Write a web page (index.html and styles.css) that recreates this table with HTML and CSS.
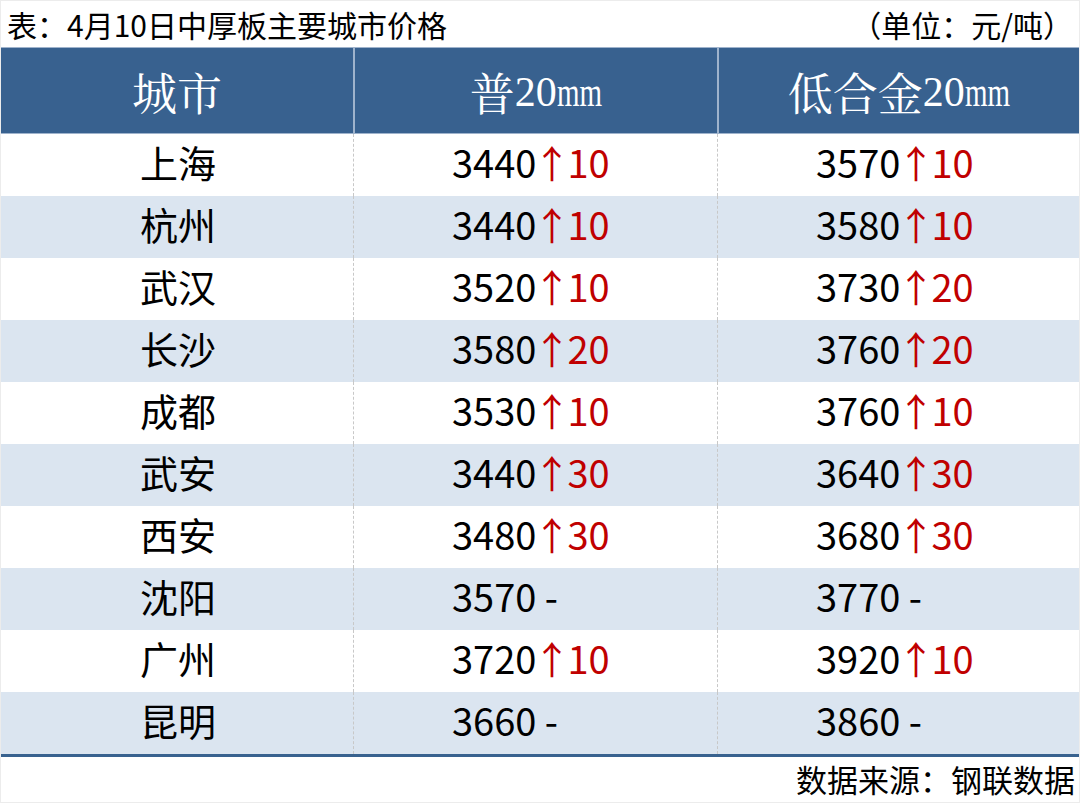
FILE: index.html
```html
<!DOCTYPE html>
<html lang="zh-CN">
<head>
<meta charset="utf-8">
<link rel="stylesheet" href="styles.css">
</head>
<body>
<div class="page">
  <div class="caption">
    <span class="title">表：4月10日中厚板主要城市价格</span>
    <span class="unit">（单位：元/吨）</span>
  </div>
  <div class="table">
    <div class="hrow">
      <div class="hcell">城市</div>
      <div class="hcell">普<span class="lat">20<span class="mm">mm</span></span></div>
      <div class="hcell">低合金<span class="lat">20<span class="mm">mm</span></span></div>
    </div>
    <div class="row"><div class="city">上海</div><div class="val">3440<span class="up"><span class="arr">↑</span>10</span></div><div class="val">3570<span class="up"><span class="arr">↑</span>10</span></div></div>
    <div class="row alt"><div class="city">杭州</div><div class="val">3440<span class="up"><span class="arr">↑</span>10</span></div><div class="val">3580<span class="up"><span class="arr">↑</span>10</span></div></div>
    <div class="row"><div class="city">武汉</div><div class="val">3520<span class="up"><span class="arr">↑</span>10</span></div><div class="val">3730<span class="up"><span class="arr">↑</span>20</span></div></div>
    <div class="row alt"><div class="city">长沙</div><div class="val">3580<span class="up"><span class="arr">↑</span>20</span></div><div class="val">3760<span class="up"><span class="arr">↑</span>20</span></div></div>
    <div class="row"><div class="city">成都</div><div class="val">3530<span class="up"><span class="arr">↑</span>10</span></div><div class="val">3760<span class="up"><span class="arr">↑</span>10</span></div></div>
    <div class="row alt"><div class="city">武安</div><div class="val">3440<span class="up"><span class="arr">↑</span>30</span></div><div class="val">3640<span class="up"><span class="arr">↑</span>30</span></div></div>
    <div class="row"><div class="city">西安</div><div class="val">3480<span class="up"><span class="arr">↑</span>30</span></div><div class="val">3680<span class="up"><span class="arr">↑</span>30</span></div></div>
    <div class="row alt"><div class="city">沈阳</div><div class="val">3570 -</div><div class="val">3770 -</div></div>
    <div class="row"><div class="city">广州</div><div class="val">3720<span class="up"><span class="arr">↑</span>10</span></div><div class="val">3920<span class="up"><span class="arr">↑</span>10</span></div></div>
    <div class="row alt"><div class="city">昆明</div><div class="val">3660 -</div><div class="val">3860 -</div></div>
  </div>
  <div class="source">数据来源：钢联数据</div>
</div>
</body>
</html>
```
FILE: styles.css
```css
* { box-sizing: border-box; }
html, body { margin: 0; padding: 0; background: #ffffff; }
.page {
  width: 1080px;
  height: 803px;
  border: 1px solid #ececec;
  font-family: "Noto Sans CJK SC", "Noto Sans", sans-serif;
  color: #000;
  overflow: hidden;
}
.caption {
  height: 46px;
  display: flex;
  justify-content: space-between;
  align-items: center;
  padding: 0 6px 0 6px;
  font-size: 30px;
  line-height: 1;
}
.table {
  border-bottom: 3px solid #38628f;
}
.hrow {
  display: grid;
  grid-template-columns: 352px 364px 1fr;
  height: 87px;
  background: #38618f;
  border-top: 1px solid #9fb3cc;
  border-bottom: 1px solid #9fb3cc;
}
.hcell {
  display: flex;
  align-items: center;
  justify-content: center;
  color: #ffffff;
  font-family: "Noto Serif CJK SC", "Noto Sans CJK SC", serif;
  font-size: 45px;
  line-height: 1;
  padding-top: 2px;
}
.hcell + .hcell { border-left: 2px solid #9fb3cc; }
.lat {
  font-family: "Liberation Serif", serif;
  font-size: 42px;
  white-space: nowrap;
}
.mm {
  display: inline-block;
  transform: scaleX(0.69);
  transform-origin: left center;
  margin-right: -20px;
}
.row {
  display: grid;
  grid-template-columns: 352px 364px 1fr;
  height: 62px;
  background: #ffffff;
}
.row.alt { background: #dbe5f0; }
.city, .val {
  display: flex;
  align-items: center;
  font-size: 38px;
  line-height: 1;
  padding-bottom: 7px;
}
.city { justify-content: center; padding-left: 2px; }
.val {
  padding-left: 98px;
  border-left: 1px dashed #c8c8c8;
}
.up { color: #c00000; }
.arr {
  display: inline-flex;
  justify-content: center;
  width: 31px;
}
.source {
  height: 46px;
  display: flex;
  justify-content: flex-end;
  align-items: center;
  padding: 0 4px 4px 0;
  font-size: 31px;
  line-height: 1;
}
```
